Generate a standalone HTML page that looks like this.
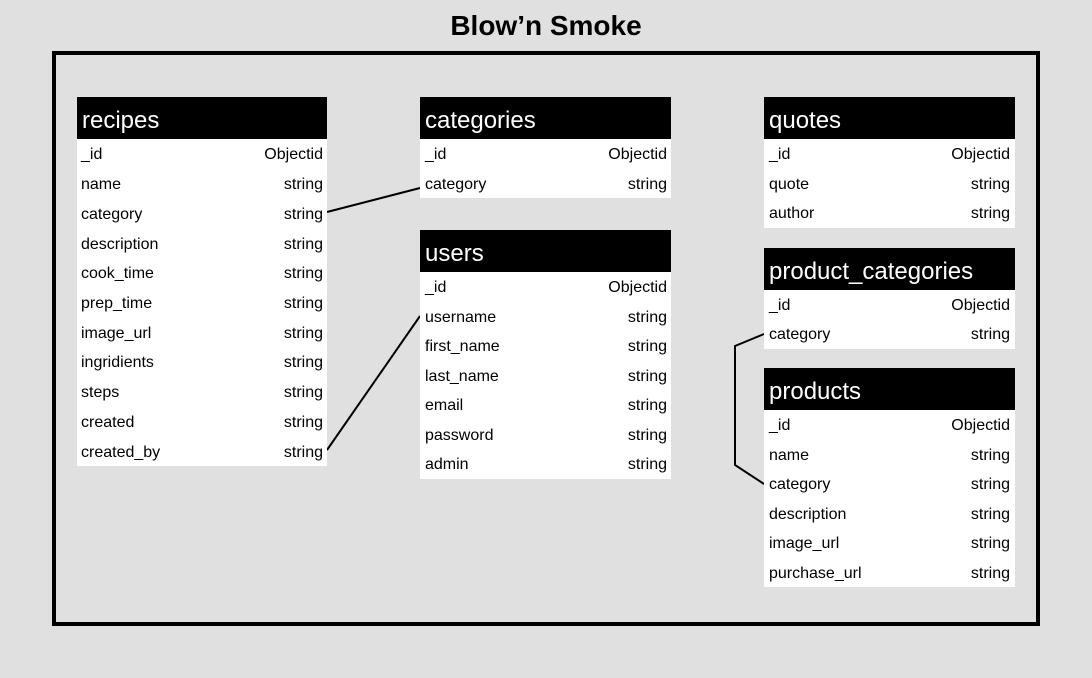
<!DOCTYPE html>
<html><head><meta charset="utf-8"><style>html,body{margin:0;padding:0;background:#e0e0e0;}svg{display:block}</style></head><body>
<svg width="1092" height="678" xmlns="http://www.w3.org/2000/svg" font-family="Liberation Sans, Arial, sans-serif">
<rect width="1092" height="678" fill="#e0e0e0"/>
<text x="546" y="35" font-size="28" font-weight="bold" text-anchor="middle">Blow’n Smoke</text>
<rect x="54" y="53" width="984" height="571" fill="none" stroke="#000" stroke-width="4"/>
<g stroke="#000" stroke-width="2" fill="none">
<polyline points="327,212 420,188"/>
<polyline points="327,450 420,316"/>
<polyline points="764,334 735,346 735,465 764,484"/>
</g>
<g font-size="16">
<!-- recipes -->
<rect x="77" y="97" width="250" height="42" fill="#000"/>
<text x="82" y="128" font-size="24" fill="#fff">recipes</text>
<rect x="77" y="139" width="250" height="327" fill="#fff"/>
<g><text x="81" y="159">_id</text><text x="323" y="159" text-anchor="end">Objectid</text>
<text x="81" y="189">name</text><text x="323" y="189" text-anchor="end">string</text>
<text x="81" y="219">category</text><text x="323" y="219" text-anchor="end">string</text>
<text x="81" y="249">description</text><text x="323" y="249" text-anchor="end">string</text>
<text x="81" y="278">cook_time</text><text x="323" y="278" text-anchor="end">string</text>
<text x="81" y="308">prep_time</text><text x="323" y="308" text-anchor="end">string</text>
<text x="81" y="338">image_url</text><text x="323" y="338" text-anchor="end">string</text>
<text x="81" y="367">ingridients</text><text x="323" y="367" text-anchor="end">string</text>
<text x="81" y="397">steps</text><text x="323" y="397" text-anchor="end">string</text>
<text x="81" y="427">created</text><text x="323" y="427" text-anchor="end">string</text>
<text x="81" y="457">created_by</text><text x="323" y="457" text-anchor="end">string</text></g>
<!-- categories -->
<rect x="420" y="97" width="251" height="42" fill="#000"/>
<text x="425" y="128" font-size="24" fill="#fff">categories</text>
<rect x="420" y="139" width="251" height="59" fill="#fff"/>
<text x="425" y="159">_id</text><text x="667" y="159" text-anchor="end">Objectid</text>
<text x="425" y="189">category</text><text x="667" y="189" text-anchor="end">string</text>
<!-- users -->
<rect x="420" y="230" width="251" height="42" fill="#000"/>
<text x="425" y="261" font-size="24" fill="#fff">users</text>
<rect x="420" y="272" width="251" height="207" fill="#fff"/>
<text x="425" y="292">_id</text><text x="667" y="292" text-anchor="end">Objectid</text>
<text x="425" y="322">username</text><text x="667" y="322" text-anchor="end">string</text>
<text x="425" y="351">first_name</text><text x="667" y="351" text-anchor="end">string</text>
<text x="425" y="381">last_name</text><text x="667" y="381" text-anchor="end">string</text>
<text x="425" y="410">email</text><text x="667" y="410" text-anchor="end">string</text>
<text x="425" y="440">password</text><text x="667" y="440" text-anchor="end">string</text>
<text x="425" y="469">admin</text><text x="667" y="469" text-anchor="end">string</text>
<!-- quotes -->
<rect x="764" y="97" width="251" height="42" fill="#000"/>
<text x="769" y="128" font-size="24" fill="#fff">quotes</text>
<rect x="764" y="139" width="251" height="89" fill="#fff"/>
<text x="769" y="159">_id</text><text x="1010" y="159" text-anchor="end">Objectid</text>
<text x="769" y="189">quote</text><text x="1010" y="189" text-anchor="end">string</text>
<text x="769" y="218">author</text><text x="1010" y="218" text-anchor="end">string</text>
<!-- product_categories -->
<rect x="764" y="248" width="251" height="42" fill="#000"/>
<text x="769" y="279" font-size="24" fill="#fff">product_categories</text>
<rect x="764" y="290" width="251" height="59" fill="#fff"/>
<text x="769" y="310">_id</text><text x="1010" y="310" text-anchor="end">Objectid</text>
<text x="769" y="339">category</text><text x="1010" y="339" text-anchor="end">string</text>
<!-- products -->
<rect x="764" y="368" width="251" height="42" fill="#000"/>
<text x="769" y="399" font-size="24" fill="#fff">products</text>
<rect x="764" y="410" width="251" height="177" fill="#fff"/>
<text x="769" y="430">_id</text><text x="1010" y="430" text-anchor="end">Objectid</text>
<text x="769" y="460">name</text><text x="1010" y="460" text-anchor="end">string</text>
<text x="769" y="489">category</text><text x="1010" y="489" text-anchor="end">string</text>
<text x="769" y="519">description</text><text x="1010" y="519" text-anchor="end">string</text>
<text x="769" y="548">image_url</text><text x="1010" y="548" text-anchor="end">string</text>
<text x="769" y="578">purchase_url</text><text x="1010" y="578" text-anchor="end">string</text>
</g>
</svg>
</body></html>
